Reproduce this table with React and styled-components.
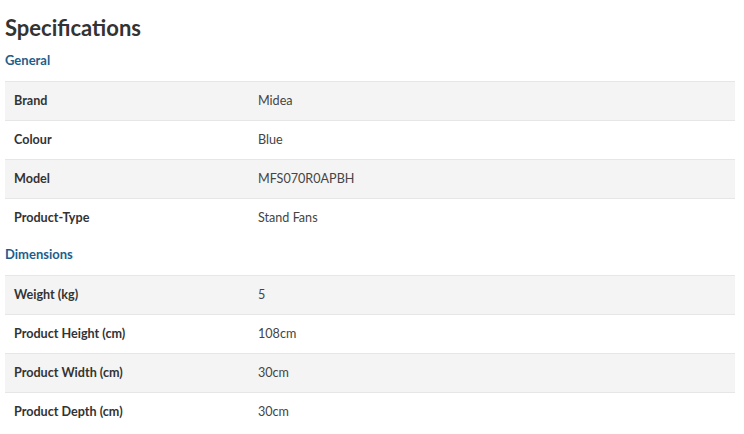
import React from "react";
import styled, { createGlobalStyle } from "styled-components";

const specs = [
  {
    group: "General",
    rows: [
      ["Brand", "Midea"],
      ["Colour", "Blue"],
      ["Model", "MFS070R0APBH"],
      ["Product-Type", "Stand Fans"],
    ],
  },
  {
    group: "Dimensions",
    rows: [
      ["Weight (kg)", "5"],
      ["Product Height (cm)", "108cm"],
      ["Product Width (cm)", "30cm"],
      ["Product Depth (cm)", "30cm"],
    ],
  },
];

const App = () => {
  return (
    <Page>
      <GlobalStyle />
      <Title>Specifications</Title>
      {specs.map((section) => (
        <Section key={section.group}>
          <GroupTitle>{section.group}</GroupTitle>
          <Table>
            <tbody>
              {section.rows.map(([label, value], i) => (
                <Row key={label} $striped={i % 2 === 0}>
                  <Label>{label}</Label>
                  <Value>{value}</Value>
                </Row>
              ))}
            </tbody>
          </Table>
        </Section>
      ))}
    </Page>
  );
};

export default App;

const GlobalStyle = createGlobalStyle`
  body {
    margin: 0;
    background: #fff;
    font-family: Lato, "Open Sans", sans-serif;
    color: #333;
  }
`;

const Page = styled.div`
  width: 730px;
  padding: 13px 0 0 5px;
`;

const Title = styled.h2`
  margin: 0;
  font-size: 22px;
  line-height: 29px;
  font-weight: 700;
  color: #333;
`;

const GroupTitle = styled.h3`
  margin: 0;
  padding: 10px 0 13px;
  font-size: 13px;
  line-height: 16px;
  font-weight: 700;
  color: #1d5e8c;
`;

const Section = styled.div`
  display: flex;
  flex-direction: column;

  & + & ${GroupTitle} {
    padding-top: 9px;
  }
`;

const Table = styled.table`
  width: 100%;
  border-collapse: collapse;
  font-size: 12.6px;
  line-height: 16px;
`;

const Row = styled.tr`
  background: ${(p) => (p.$striped ? "#f4f4f4" : "#fff")};
  border-top: 1px solid #e6e6e6;
`;

const Label = styled.td`
  width: 244px;
  padding: 11px 0 11px 9px;
  font-weight: 700;
  color: #333;
`;

const Value = styled.td`
  padding: 11px 9px 11px 0;
  color: #444;
`;
